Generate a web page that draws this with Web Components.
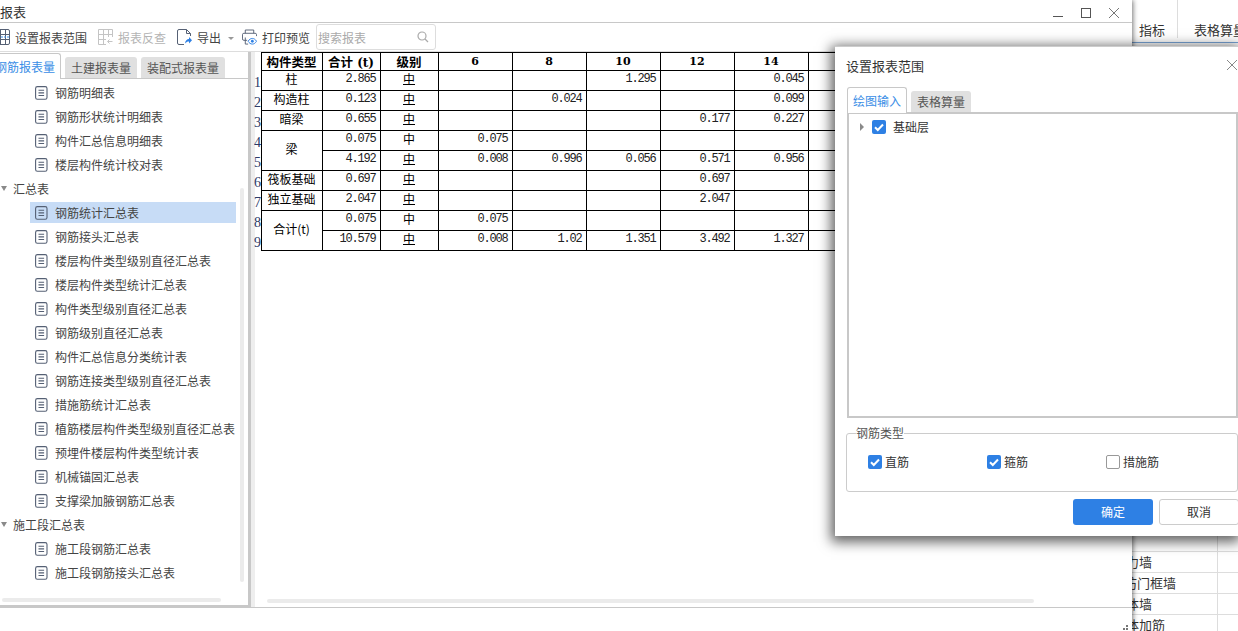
<!DOCTYPE html>
<html lang="zh">
<head>
<meta charset="utf-8">
<title>报表</title>
<style>
  html, body { margin: 0; height: 631px; overflow: hidden; background: #fff; }
  body { display: flex; font: 12px "Noto Sans CJK SC", sans-serif; color: #444; }
</style>
</head>
<body>
<report-window></report-window>
<back-sheet></back-sheet>
<range-dialog></range-dialog>

<script>
const docIcon = `<svg width="13" height="14" viewBox="0 0 13 14" fill="none" stroke="#556074" stroke-width="1.1"><rect x=".6" y=".6" width="11.4" height="12.6" rx="1.8"/><path d="M3.5 4.3h5.6M3.5 6.9h5.6M3.5 9.5h5.6"/></svg>`;

class ToolButton extends HTMLElement {
  constructor() {
    super();
    this.attachShadow({ mode: 'open' }).innerHTML = `
      <style>
        :host { display: flex; align-items: center; gap: 5px; height: 28px; color: #444; white-space: nowrap; }
        :host([disabled]) { color: #b4b4b4; }
        ::slotted(svg) { display: block; flex: none; }
      </style>
      <slot name="icon"></slot><slot></slot>`;
  }
}
customElements.define('tool-button', ToolButton);

class ReportToolbar extends HTMLElement {
  constructor() {
    super();
    this.attachShadow({ mode: 'open' }).innerHTML = `
      <style>
        :host { display: flex; align-items: center; height: 28px; border-bottom: 1px solid #ddd; flex: none; }
        tool-button { margin-right: 11px; }
        .first { margin-left: -5px; }
        .caret { width: 0; height: 0; border: 3px solid transparent; border-top: 3px solid #999; border-bottom: 0; margin: 2px 8px 0 -4px; }
        .search { width: 116px; height: 24px; margin-left: -5px; padding: 0 1px; border: 1px solid #ddd; border-radius: 3px;
          display: flex; align-items: center; justify-content: space-between; color: #aaa; }
        .search svg { margin-right: 5px; }
      </style>
      <tool-button class="first">
        <svg slot="icon" width="15" height="16" viewBox="0 0 15 16" fill="none" stroke="#556074"><rect x=".5" y=".5" width="14" height="15" rx="1.5"/><path d="M.5 5.5h14M.5 10.5h14M5.5.5v15M10.5.5v15"/><path d="M6 8h8" stroke="#3a8ee6" stroke-dasharray="2 1"/></svg>
        设置报表范围
      </tool-button>
      <tool-button disabled>
        <svg slot="icon" width="15" height="16" viewBox="0 0 15 16" fill="none" stroke="#c4c4c4"><path d="M8 15.500H.5V.5h14V8M.5 5.500h14M.5 10.500H8M5.500.5v15M10.500.5V8"/><path d="M14.500 12.500H10M11.500 10.500l-2 2 2 2"/></svg>
        报表反查
      </tool-button>
      <tool-button>
        <svg slot="icon" width="15" height="17" viewBox="0 0 15 17" fill="none" stroke="#556074"><path d="M7 15.500H2A1.500 1.500 0 0 1 .5 14V2A1.500 1.500 0 0 1 2 .5h7.500l4 4V7"/><path d="M9.500.5v4h4"/><path d="M8 14.500c.3-3 2-4.500 4-4.500V8l3 3.200-3 3.200v-2c-1.500 0-3 .6-4 2.100z" fill="#2e80e4" stroke="none"/></svg>
        导出
      </tool-button>
      <span class="caret"></span>
      <tool-button>
        <svg slot="icon" width="15" height="17" viewBox="0 0 16 17" fill="none" stroke="#556074"><path d="M3.500 4V.5h9V4"/><path d="M5.500 11.500H2A1.500 1.500 0 0 1 .5 10V5.500A1.500 1.500 0 0 1 2 4h12a1.500 1.500 0 0 1 1.500 1.500V7"/><path d="M3.500 8.500v7h3"/><path d="M6.500 12.500c1.200-2 2.800-3 4.500-3s3.300 1 4.500 3c-1.200 2-2.800 3-4.500 3s-3.300-1-4.500-3z" stroke="#2e80e4"/><circle cx="11" cy="12.500" r="1.500" fill="#2e80e4" stroke="none"/></svg>
        打印预览
      </tool-button>
      <div class="search">搜索报表
        <svg width="12" height="12" viewBox="0 0 12 12" fill="none" stroke="#aaa" stroke-width="1.2"><circle cx="5" cy="5" r="4"/><path d="M8 8l3 3"/></svg>
      </div>`;
  }
}
customElements.define('report-toolbar', ReportToolbar);

class TabStrip extends HTMLElement {
  // tabs come from a "tabs" attribute, the first one is the active one
  connectedCallback() {
    const tabs = this.getAttribute('tabs').split(',');
    this.attachShadow({ mode: 'open' }).innerHTML = `
      <style>
        :host { display: flex; align-items: flex-end; gap: 4px; height: 26px; border-bottom: 1px solid #c8c8c8; flex: none; white-space: nowrap; }
        div { height: 21px; line-height: 21px; padding: 0 6px; background: #e0e0e0; border-radius: 3px 3px 0 0; color: #555; }
        .on { height: 25px; line-height: 25px; margin-bottom: -1px; padding: 0 5px; background: #fff; border: 1px solid #c8c8c8;
          border-bottom: 0; color: #3a8ee6; }
      </style>
      ${tabs.map((t, i) => `<div class="${i ? '' : 'on'}">${t}</div>`).join('')}`;
  }
}
customElements.define('tab-strip', TabStrip);

class TreeRow extends HTMLElement {
  connectedCallback() {
    const group = this.hasAttribute('group');
    this.attachShadow({ mode: 'open' }).innerHTML = `
      <style>
        :host { display: block; height: 24px; box-sizing: border-box; padding-top: 1px; white-space: nowrap; }
        .row { display: flex; align-items: center; height: 21px; margin-left: 30px; width: 201px; padding-left: 5px; gap: 7px; color: #444; }
        :host([selected]) .row { background: #c7dcf6; }
        .group { margin-left: 1px; padding-left: 0; gap: 6px; }
        .arrow { width: 0; height: 0; border: 3px solid transparent; border-top: 5px solid #8a8a8a; border-bottom: 0; }
        svg { display: block; flex: none; }
      </style>
      <div class="row ${group ? 'group' : ''}">
        ${group ? '<span class="arrow"></span>' : docIcon}
        <slot></slot>
      </div>`;
  }
}
customElements.define('tree-row', TreeRow);

class ReportTree extends HTMLElement {
  constructor() {
    super();
    const rows = [
      '钢筋明细表', '钢筋形状统计明细表', '构件汇总信息明细表', '楼层构件统计校对表',
      '#汇总表',
      '*钢筋统计汇总表', '钢筋接头汇总表', '楼层构件类型级别直径汇总表', '楼层构件类型统计汇总表',
      '构件类型级别直径汇总表', '钢筋级别直径汇总表', '构件汇总信息分类统计表', '钢筋连接类型级别直径汇总表',
      '措施筋统计汇总表', '植筋楼层构件类型级别直径汇总表', '预埋件楼层构件类型统计表', '机械锚固汇总表',
      '支撑梁加腋钢筋汇总表',
      '#施工段汇总表',
      '施工段钢筋汇总表', '施工段钢筋接头汇总表',
    ];
    this.attachShadow({ mode: 'open' }).innerHTML = `
      <style>
        :host { display: block; position: relative; flex: 1; padding-top: 2px; }
        .bar { position: absolute; background: #ebebeb; border-radius: 2px; }
        .v { left: 240px; top: 109px; width: 4px; height: 394px; }
        .h { left: 2px; top: 519px; width: 219px; height: 4px; }
      </style>
      ${rows.map(r => {
        if (r[0] === '#') return `<tree-row group>${r.slice(1)}</tree-row>`;
        if (r[0] === '*') return `<tree-row selected>${r.slice(1)}</tree-row>`;
        return `<tree-row>${r}</tree-row>`;
      }).join('')}
      <div class="bar v"></div><div class="bar h"></div>`;
  }
}
customElements.define('report-tree', ReportTree);

class RebarTable extends HTMLElement {
  constructor() {
    super();
    const rows = [
      ['柱', '2.865', 2, '', '', '1.295', '', '0.045'],
      ['构造柱', '0.123', 2, '', '0.024', '', '', '0.099'],
      ['暗梁', '0.655', 2, '', '', '', '0.177', '0.227'],
      ['梁', '0.075', 1, '0.075', '', '', '', ''],
      [null, '4.192', 2, '0.008', '0.996', '0.056', '0.571', '0.956'],
      ['筏板基础', '0.697', 2, '', '', '', '0.697', ''],
      ['独立基础', '2.047', 2, '', '', '', '2.047', ''],
      ['合计(t)', '0.075', 1, '0.075', '', '', '', ''],
      [null, '10.579', 2, '0.008', '1.02', '1.351', '3.492', '1.327'],
    ];
    const merged = new Set(['梁', '合计(t)']);
    const body = rows.map((r, i) => {
      const name = r[0] === null ? ''
        : `<td class="name"${merged.has(r[0]) ? ' rowspan="2"' : ''}>${r[0]}</td>`;
      const level = r[2] === 1 ? '<span class="lv">中</span>' : '<span class="lv two">中</span>';
      const nums = r.slice(3).map(n => `<td class="num">${n}</td>`).join('');
      return `<tr><th class="idx">${i + 1}</th>${name}<td class="num">${r[1]}</td><td class="name">${level}</td>${nums}<td></td></tr>`;
    }).join('');
    this.attachShadow({ mode: 'open' }).innerHTML = `
      <style>
        :host { display: block; flex: 1; min-height: 0; }
        table { border-collapse: collapse; table-layout: fixed; width: 628px; margin-left: -1px; color: #000; }
        th, td { border: 1px solid #000; padding: 0; box-sizing: border-box; overflow: hidden; white-space: nowrap; }
        thead tr { height: 18px; }
        thead td { font: bold 12.500px/15px "Noto Sans CJK SC", sans-serif; text-align: center; }
        thead td.n { font: bold 11px/15px "DejaVu Serif", serif; }
        .t { font: bold 12px "DejaVu Serif", serif; }
        tbody tr { height: 20px; }
        .idx { border: 0; border-right: 1px solid #000; font: 400 14px/14px "Liberation Serif", serif; color: #2b3a67; text-align: right; vertical-align: bottom; padding-bottom: 1px; }
        .corner { border: 0; border-right: 1px solid #000; }
        .name { font-size: 12px; line-height: 16px; text-align: center; padding-bottom: 3px; }
        .num { font: 12px/14px "Liberation Mono", monospace; letter-spacing: -1.2px; text-align: right; padding: 0 4px 4px 0; color: #222; }
        .lv { font-size: 12px; color: #000; display: inline-block; line-height: 11px; }
        .two { border-bottom: 1px solid #000; line-height: 10px; height: 10px; }
      </style>
      <table>
        <colgroup><col style="width:7px"><col style="width:61px"><col style="width:58px"><col style="width:58px">
          <col style="width:74px"><col style="width:74px"><col style="width:74px"><col style="width:74px"><col style="width:74px"><col style="width:74px"></colgroup>
        <thead><tr><th class="corner"></th><td>构件类型</td><td>合计<span class="t"> (t)</span></td><td>级别</td>
          <td class="n">6</td><td class="n">8</td><td class="n">10</td><td class="n">12</td><td class="n">14</td><td></td></tr></thead>
        <tbody>${body}</tbody>
      </table>`;
  }
}
customElements.define('rebar-table', RebarTable);

class ReportWindow extends HTMLElement {
  constructor() {
    super();
    this.attachShadow({ mode: 'open' }).innerHTML = `
      <style>
        :host { display: flex; flex-direction: column; position: relative; z-index: 1; width: 1132px; height: 631px; flex: none;
          background: #fff; box-shadow: 1px 0 5px rgba(0,0,0,.55); overflow: hidden; }
        .title { display: flex; align-items: center; justify-content: space-between; height: 22px; flex: none; border-bottom: 1px solid #c8c8c8;
          font-size: 13px; color: #333; }
        .controls { display: flex; gap: 18px; margin-right: 13px; margin-top: 3px; }
        .controls svg { display: block; }
        .main { display: flex; height: 555px; flex: none; border-bottom: 1px solid #c8c8c8; }
        .left { display: flex; flex-direction: column; width: 248px; flex: none; border-right: 3px solid #c8c8c8; border-bottom: 2px solid #c8c8c8; overflow: hidden; }
        .split { width: 4px; flex: none; background: #eee; }
        .right { flex: 1; min-width: 0; display: flex; flex-direction: column; padding-bottom: 4px; }
        .hbar { height: 4px; width: 767px; margin-left: 12px; background: #ebebeb; border-radius: 2px; flex: none; }
        tab-strip { margin-left: -11px; }
        .foot { flex: 1; display: flex; justify-content: flex-end; align-items: flex-end; padding-right: 3px; }
        .foot svg { display: block; }
      </style>
      <div class="title">
        <span>报表</span>
        <div class="controls">
          <svg width="10" height="10" viewBox="0 0 10 10" stroke="#555"><path d="M0 8.500h10"/></svg>
          <svg width="10" height="10" viewBox="0 0 10 10" fill="none" stroke="#555"><rect x=".5" y=".5" width="9" height="9"/></svg>
          <svg width="10" height="10" viewBox="0 0 10 10" stroke="#777"><path d="M0 0l10 10M10 0L0 10"/></svg>
        </div>
      </div>
      <report-toolbar></report-toolbar>
      <div class="main">
        <div class="left">
          <tab-strip tabs="钢筋报表量,土建报表量,装配式报表量"></tab-strip>
          <report-tree></report-tree>
        </div>
        <div class="split"></div>
        <div class="right">
          <rebar-table></rebar-table>
          <div class="hbar"></div>
        </div>
      </div>
      <div class="foot">
        <svg width="6" height="6" viewBox="0 0 6 6" fill="#777"><rect x="3" width="2" height="2"/><rect y="3" width="2" height="2"/><rect x="3" y="3" width="2" height="2"/></svg>
      </div>`;
  }
}
customElements.define('report-window', ReportWindow);

class BackSheet extends HTMLElement {
  constructor() {
    super();
    const names = ['', '剪力墙', '人防门框墙', '砌体墙', '砌体加筋'];
    this.attachShadow({ mode: 'open' }).innerHTML = `
      <style>
        :host { display: block; flex: 1; min-width: 0; margin-left: -22px; height: 631px; overflow: hidden; font-size: 13px; color: #333; }
        .head { display: flex; height: 42px; border-bottom: 1px solid #7aa6d8; white-space: nowrap; }
        .head div { flex: none; height: 38px; box-sizing: border-box; padding-top: 21px; line-height: 18px; }
        .c1 { width: 68px; padding-left: 29px; border-right: 1px solid #ddd; }
        .c2 { padding-left: 16px; }
        .rows { margin-top: 488px; }
        .row { display: grid; grid-template-columns: 108px 1fr; height: 21px; box-sizing: border-box; border-bottom: 1px solid #ddd; line-height: 20px; white-space: nowrap; }
        .row span { padding-left: 3px; border-right: 1px solid #ddd; }
        .shift { text-indent: -2px; }
      </style>
      <div class="head"><div class="c1">指标</div><div class="c2">表格算量</div></div>
      <div class="rows">
        ${names.map(n => `<div class="row"><span class="${n.length === 5 ? 'shift' : ''}">${n}</span><i></i></div>`).join('')}
      </div>`;
  }
}
customElements.define('back-sheet', BackSheet);

class CheckMark extends HTMLElement {
  constructor() {
    super();
    this.attachShadow({ mode: 'open' }).innerHTML = `
      <style>
        :host { display: inline-flex; align-items: center; gap: 3px; color: #333; white-space: nowrap; }
        i { display: block; width: 14px; height: 14px; box-sizing: border-box; border: 1px solid #999; border-radius: 2px; background: #fff; }
        svg { display: none; }
        :host([checked]) i { border: 0; background: #2e80e4; }
        :host([checked]) svg { display: block; }
      </style>
      <i><svg width="14" height="14" viewBox="0 0 14 14" fill="none" stroke="#fff" stroke-width="2"><path d="M3 7.200l2.800 2.800L11 4.500"/></svg></i>
      <slot></slot>`;
  }
}
customElements.define('check-mark', CheckMark);

class RangeDialog extends HTMLElement {
  constructor() {
    super();
    this.attachShadow({ mode: 'open' }).innerHTML = `
      <style>
        :host { position: absolute; left: 835px; top: 46px; z-index: 2; width: 403px; box-sizing: border-box; padding: 0 0 11px 12px;
          background: #fff; border-top: 1px solid #ccc; box-shadow: -1px 3px 12px 3px rgba(0,0,0,.62); color: #333; }
        .head { display: flex; align-items: center; justify-content: space-between; height: 39px; box-sizing: border-box; padding-bottom: 3px; font-size: 13px; margin-left: -1px; }
        .head svg { display: block; }
        .box { height: 305px; box-sizing: border-box; border: 2px solid #c8c8c8; border-top-width: 1px; padding: 4px 0 0 11px; display: flex; align-items: center; align-content: flex-start; flex-wrap: wrap; }
        .tri { width: 0; height: 0; border: 4px solid transparent; border-left: 4px solid #8a8a8a; border-right: 0; margin-right: 8px; }
        .box check-mark { gap: 7px; }
        fieldset { margin: 9px 0 0 -1px; padding: 0 0 0 21px; height: 65px; box-sizing: border-box; border: 1px solid #ccc; border-radius: 3px; }
        legend { padding: 0; margin-left: -12px; font-size: 12px; line-height: 12px; color: #555; }
        .types { display: flex; margin-top: 14px; }
        .types check-mark { width: 119px; }
        .btns { display: flex; justify-content: flex-end; gap: 6px; margin-top: 7px; }
        .btns div { width: 80px; height: 26px; line-height: 26px; box-sizing: border-box; text-align: center; border-radius: 3px; margin-right: -1px; }
        .ok { background: #2e80e4; color: #fff; margin-right: 0 !important; }
        .no { border: 1px solid #ccc; line-height: 24px !important; }
      </style>
      <div class="head">设置报表范围
        <svg width="12" height="12" viewBox="0 0 12 12" stroke="#888"><path d="M1 1l10 10M11 1L1 11"/></svg>
      </div>
      <tab-strip tabs="绘图输入,表格算量"></tab-strip>
      <div class="box"><span class="tri"></span><check-mark checked>基础层</check-mark></div>
      <fieldset>
        <legend>钢筋类型</legend>
        <div class="types">
          <check-mark checked>直筋</check-mark>
          <check-mark checked>箍筋</check-mark>
          <check-mark>措施筋</check-mark>
        </div>
      </fieldset>
      <div class="btns"><div class="ok">确定</div><div class="no">取消</div></div>`;
  }
}
customElements.define('range-dialog', RangeDialog);
</script>
</body>
</html>
